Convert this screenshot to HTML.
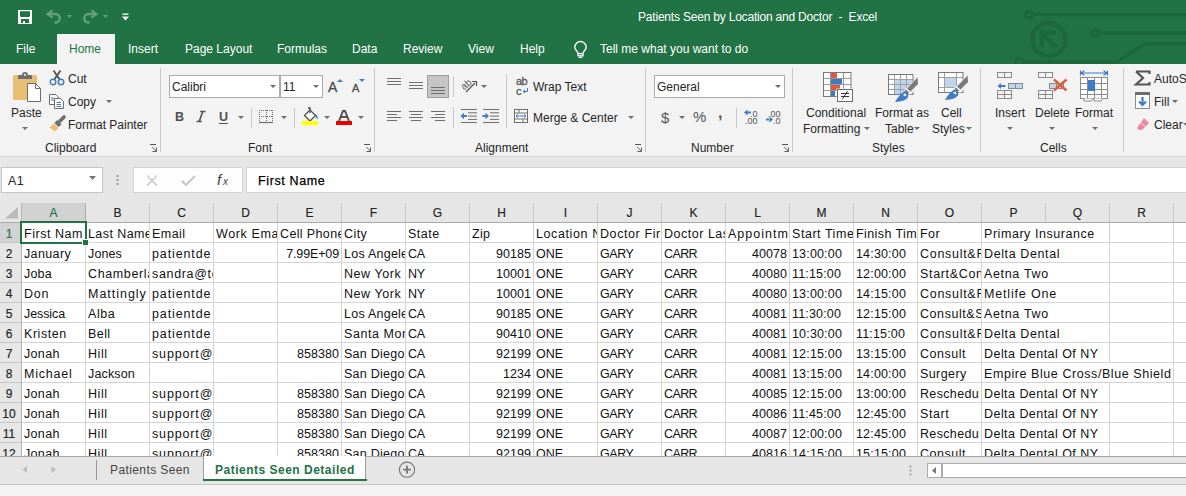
<!DOCTYPE html><html><head><meta charset="utf-8"><style>
html,body{margin:0;padding:0}
body{width:1186px;height:496px;overflow:hidden;position:relative;background:#f3f3f3;font-family:"Liberation Sans",sans-serif}
.t{position:absolute;white-space:nowrap;line-height:1}
svg{overflow:visible}
.cell{font-size:12.5px;letter-spacing:0.5px;color:#111;height:19px;line-height:19px;}
.tx{letter-spacing:0.62px}
.c{overflow:hidden;padding-left:2px;box-sizing:border-box;width:63px}
.r{text-align:right;overflow:hidden}
</style></head><body>
<div style="position:absolute;left:0px;top:0px;width:1186px;height:64px;background:#217346"></div>
<svg style="position:absolute;left:990px;top:0px;" width="196" height="64" viewBox="0 0 196 64"><g fill="none" stroke="#1d673d" stroke-width="3.5"><circle cx="39.2" cy="14.5" r="3.6"/><line x1="43" y1="14.5" x2="196" y2="14.5"/><circle cx="58.7" cy="39.7" r="16.5" stroke-width="4.5"/><circle cx="105" cy="33" r="3.6"/><line x1="108.8" y1="33" x2="196" y2="33"/><polyline points="33,62 127,62 155.4,43.8 196,43.8"/><circle cx="29.4" cy="62" r="3.6"/></g><g fill="none" stroke="#1d673d" stroke-width="4.2"><polyline points="66,32.6 51.6,32.6 51.6,47"/><line x1="53" y1="34" x2="66.5" y2="47.5"/></g></svg>
<svg style="position:absolute;left:18px;top:10px;" width="14" height="14" viewBox="0 0 14 14"><rect x="0" y="0" width="14" height="14" fill="#fff"/><path d="M2,1.2 H12 V6 L11,7 H3 L2,6 Z" fill="#217346"/><rect x="3" y="9" width="8" height="4" fill="#217346"/><rect x="5" y="11" width="2" height="2" fill="#fff"/></svg>
<svg style="position:absolute;left:42px;top:6px;" width="70" height="22" viewBox="0 0 70 22"><g fill="none" stroke="#68a07f" stroke-width="2.3"><polyline points="10.5,4.3 5.6,8 10.5,11.7"/><path d="M6,8 H13.5 A4.25,4.25 0 0 1 13.5,16.5 H12.5"/><polyline points="49.5,4.3 54.4,8 49.5,11.7"/><path d="M54,8 H46.5 A4.25,4.25 0 0 0 46.5,16.5 H47.5"/></g><path d="M25,9 H30 L27.5,12 Z M61,9 H66 L63.5,12 Z" fill="#68a07f"/></svg>
<svg style="position:absolute;left:122px;top:13px;" width="7" height="8" viewBox="0 0 7 8"><rect x="0.5" y="0.5" width="6" height="1.3" fill="#fff"/><path d="M0,3.5 H7 L3.5,7.5 Z" fill="#fff"/></svg>
<div class="t " style="left:638px;top:11px;font-size:12px;color:#fff;letter-spacing:-0.2px">Patients Seen by Location and Doctor&nbsp;&nbsp;-&nbsp;&nbsp;Excel</div>
<div style="position:absolute;left:57px;top:34px;width:58px;height:30px;background:#f3f3f3"></div>
<div class="t " style="left:16px;top:43px;font-size:12px;color:#fff;">File</div>
<div class="t " style="left:128px;top:43px;font-size:12px;color:#fff;">Insert</div>
<div class="t " style="left:185px;top:43px;font-size:12px;color:#fff;">Page Layout</div>
<div class="t " style="left:277px;top:43px;font-size:12px;color:#fff;">Formulas</div>
<div class="t " style="left:352px;top:43px;font-size:12px;color:#fff;">Data</div>
<div class="t " style="left:403px;top:43px;font-size:12px;color:#fff;">Review</div>
<div class="t " style="left:468px;top:43px;font-size:12px;color:#fff;">View</div>
<div class="t " style="left:520px;top:43px;font-size:12px;color:#fff;">Help</div>
<div class="t " style="left:600px;top:43px;font-size:12px;color:#fff;">Tell me what you want to do</div>
<div class="t " style="left:69px;top:43px;font-size:12px;color:#217346;">Home</div>
<svg style="position:absolute;left:573px;top:40.5px;" width="15" height="18" viewBox="0 0 15 18"><path d="M4.8,12.2 C4.8,10 1.8,8.8 1.8,6.2 A5.7,5.7 0 0 1 13.2,6.2 C13.2,8.8 10.2,10 10.2,12.2" fill="none" stroke="#fff" stroke-width="1.35"/><rect x="5" y="12.6" width="5" height="2.2" fill="none" stroke="#fff" stroke-width="1.35"/><line x1="5.8" y1="16.4" x2="9.2" y2="16.4" stroke="#fff" stroke-width="1.35"/></svg>
<div style="position:absolute;left:0px;top:64px;width:1186px;height:92px;background:#f3f3f3"></div>
<div style="position:absolute;left:0px;top:156px;width:1186px;height:1px;background:#d6d6d6"></div>
<div style="position:absolute;left:160px;top:68px;width:1px;height:84px;background:#c9c9c9"></div>
<div style="position:absolute;left:374px;top:68px;width:1px;height:84px;background:#c9c9c9"></div>
<div style="position:absolute;left:645px;top:68px;width:1px;height:84px;background:#c9c9c9"></div>
<div style="position:absolute;left:792px;top:68px;width:1px;height:84px;background:#c9c9c9"></div>
<div style="position:absolute;left:980px;top:68px;width:1px;height:84px;background:#c9c9c9"></div>
<div style="position:absolute;left:1123px;top:68px;width:1px;height:84px;background:#c9c9c9"></div>
<svg style="position:absolute;left:12px;top:71px;" width="31" height="32" viewBox="0 0 31 32"><rect x="1" y="4" width="24" height="25" rx="1.5" fill="#e8be74"/><path d="M6,8 V5 Q6,4 7,4 H10 A3,3 0 0 1 16,4 H19 Q20,4 20,5 V8 Z" fill="#6d6d6d"/><circle cx="13" cy="3.8" r="1.1" fill="#f3f3f3"/><path d="M15.5,12.5 H23.5 L28.5,17.5 V30.5 H15.5 Z" fill="#fff" stroke="#6d6d6d" stroke-width="1"/><path d="M23.5,12.5 V17.5 H28.5" fill="none" stroke="#6d6d6d" stroke-width="1"/></svg>
<div class="t " style="left:11px;top:107px;font-size:12px;color:#262626;">Paste</div>
<svg style="position:absolute;left:22px;top:127px;" width="6" height="4" viewBox="0 0 6 4"><path d="M0,0 H6 L3,3 Z" fill="#6d6d6d"/></svg>
<svg style="position:absolute;left:49px;top:70px;" width="16" height="16" viewBox="0 0 16 16"><path d="M4.5,0.5 L11,10 M11.5,0.5 L5,10" stroke="#555" stroke-width="1.9" fill="none"/><circle cx="4" cy="12" r="2.8" fill="none" stroke="#3f7cc6" stroke-width="1.4"/><circle cx="12" cy="12" r="2.8" fill="none" stroke="#3f7cc6" stroke-width="1.4"/></svg>
<div class="t " style="left:68px;top:73px;font-size:12px;color:#262626;">Cut</div>
<svg style="position:absolute;left:48px;top:93px;" width="17" height="16" viewBox="0 0 17 16"><path d="M1.5,1.5 H8 L10,3.5 V11.5 H1.5 Z" fill="#fff" stroke="#6d6d6d" stroke-width="1"/><path d="M6.5,5.5 H12.5 L15.5,8.5 V15.5 H6.5 Z" fill="#fff" stroke="#6d6d6d" stroke-width="1"/><path d="M3,5 H6 M3,7 H6 M8.5,9.5 H13 M8.5,11.5 H13 M8.5,13.5 H13" stroke="#3f7cc6" stroke-width="1"/></svg>
<div class="t " style="left:68px;top:96px;font-size:12px;color:#262626;">Copy</div>
<svg style="position:absolute;left:106px;top:100px;" width="6" height="4" viewBox="0 0 6 4"><path d="M0,0 H6 L3,3 Z" fill="#6d6d6d"/></svg>
<svg style="position:absolute;left:49px;top:116px;" width="17" height="16" viewBox="0 0 17 16"><path d="M11,5 L15,1" stroke="#6d6d6d" stroke-width="3.6" stroke-linecap="round"/><path d="M8,4 L12.5,8.5 L9.5,11 L5.5,7 Z" fill="#6d6d6d"/><path d="M5,7.5 L9.5,12 L6,15.5 L0.5,11.5 Q3,9 5,7.5 Z" fill="#e8be74"/></svg>
<div class="t " style="left:68px;top:119px;font-size:12px;color:#262626;">Format Painter</div>
<div class="t " style="left:45px;top:142px;font-size:12px;color:#262626;">Clipboard</div>
<svg style="position:absolute;left:150px;top:144px;" width="8" height="9" viewBox="0 0 8 9"><rect x="0" y="0" width="6" height="1" fill="#555"/><path d="M2.3,3 L6.3,7 M6.5,3.5 V7.5 H2.5" fill="none" stroke="#555" stroke-width="0.95"/></svg>
<div style="position:absolute;left:169px;top:75px;width:111px;height:23px;background:#fff;border:1px solid #ababab;box-sizing:border-box"></div>
<div style="position:absolute;left:280px;top:75px;width:43px;height:23px;background:#fff;border:1px solid #ababab;box-sizing:border-box"></div>
<div class="t " style="left:172px;top:81px;font-size:12px;color:#262626;">Calibri</div>
<svg style="position:absolute;left:270px;top:85px;" width="6" height="4" viewBox="0 0 6 4"><path d="M0,0 H6 L3,3 Z" fill="#6d6d6d"/></svg>
<div class="t " style="left:283px;top:81px;font-size:12px;color:#262626;">11</div>
<svg style="position:absolute;left:313px;top:85px;" width="6" height="4" viewBox="0 0 6 4"><path d="M0,0 H6 L3,3 Z" fill="#6d6d6d"/></svg>
<div class="t " style="left:328px;top:80px;font-size:14px;color:#4a4a4a;-webkit-text-stroke:0.3px #4a4a4a">A</div>
<svg style="position:absolute;left:337px;top:79px;" width="6" height="4" viewBox="0 0 6 4"><path d="M0,3 H6 L3,0 Z" fill="#3f7cc6"/></svg>
<div class="t " style="left:352px;top:83px;font-size:11px;color:#4a4a4a;-webkit-text-stroke:0.3px #4a4a4a">A</div>
<svg style="position:absolute;left:359px;top:79px;" width="6" height="4" viewBox="0 0 6 4"><path d="M0,0 H6 L3,3 Z" fill="#3f7cc6"/></svg>
<div class="t " style="left:175px;top:110.75px;font-size:12.5px;color:#505050;font-weight:bold">B</div>
<svg style="position:absolute;left:196px;top:111px;" width="10" height="11" viewBox="0 0 10 11"><path d="M4.2,0.5 H9.5 M0.5,10.5 H5.8 M6.8,0.5 L3.2,10.5" stroke="#505050" stroke-width="1.6" fill="none"/></svg>
<div class="t " style="left:219px;top:110.75px;font-size:12.5px;color:#505050;font-weight:bold">U</div>
<div style="position:absolute;left:219px;top:123px;width:9px;height:1.4px;background:#505050"></div>
<svg style="position:absolute;left:238px;top:116px;" width="6" height="4" viewBox="0 0 6 4"><path d="M0,0 H6 L3,3 Z" fill="#6d6d6d"/></svg>
<div style="position:absolute;left:251px;top:108px;width:1px;height:20px;background:#c8c8c8"></div>
<svg style="position:absolute;left:259px;top:110px;" width="14" height="14" viewBox="0 0 14 14"><g fill="none" stroke="#6d6d6d" stroke-width="1" stroke-dasharray="1,1"><path d="M0.5,0 V12 M13.5,0 V12 M0,0.5 H14 M7.5,0 V12 M0,6.5 H14"/></g><path d="M0,12.5 H14" stroke="#6d6d6d" stroke-width="1.2"/></svg>
<svg style="position:absolute;left:281px;top:116px;" width="6" height="4" viewBox="0 0 6 4"><path d="M0,0 H6 L3,3 Z" fill="#6d6d6d"/></svg>
<div style="position:absolute;left:294px;top:108px;width:1px;height:20px;background:#c8c8c8"></div>
<svg style="position:absolute;left:302px;top:107px;" width="17" height="19" viewBox="0 0 17 19"><path d="M2.5,8.5 L8,3 L13.5,8.5 L8,14 Z" fill="#fff" stroke="#505050" stroke-width="1.3" stroke-linejoin="round"/><path d="M6,1 H8 V6" fill="none" stroke="#505050" stroke-width="1.3"/><path d="M13,7 Q16.5,8 15.5,12.5 Q13.5,11 13,7 Z" fill="#3f7cc6"/><rect x="0" y="14" width="16" height="4" fill="#ffff00"/></svg>
<svg style="position:absolute;left:324px;top:116px;" width="6" height="4" viewBox="0 0 6 4"><path d="M0,0 H6 L3,3 Z" fill="#6d6d6d"/></svg>
<svg style="position:absolute;left:336px;top:110px;" width="16" height="16" viewBox="0 0 16 16"><path d="M3,11.2 L7,1 H9 L13,11.2 M5,7 H11" fill="none" stroke="#505050" stroke-width="1.9"/><rect x="0" y="11" width="16" height="4" fill="#ee0000"/></svg>
<svg style="position:absolute;left:358px;top:116px;" width="6" height="4" viewBox="0 0 6 4"><path d="M0,0 H6 L3,3 Z" fill="#6d6d6d"/></svg>
<div class="t " style="left:248px;top:142px;font-size:12px;color:#262626;">Font</div>
<svg style="position:absolute;left:364px;top:144px;" width="8" height="9" viewBox="0 0 8 9"><rect x="0" y="0" width="6" height="1" fill="#555"/><path d="M2.3,3 L6.3,7 M6.5,3.5 V7.5 H2.5" fill="none" stroke="#555" stroke-width="0.95"/></svg>
<svg style="position:absolute;left:387px;top:78px;" width="20" height="10" viewBox="0 0 20 10"><rect x="0" y="0" width="14" height="1" fill="#6d6d6d"/><rect x="0" y="3" width="14" height="1" fill="#6d6d6d"/><rect x="0" y="6" width="14" height="1" fill="#6d6d6d"/></svg>
<svg style="position:absolute;left:409px;top:82px;" width="20" height="10" viewBox="0 0 20 10"><rect x="0" y="0" width="14" height="1" fill="#6d6d6d"/><rect x="0" y="3" width="14" height="1" fill="#6d6d6d"/><rect x="0" y="6" width="14" height="1" fill="#6d6d6d"/></svg>
<div style="position:absolute;left:427px;top:75px;width:22px;height:23px;background:#c5c5c5;border:1px solid #9e9e9e;box-sizing:border-box"></div>
<svg style="position:absolute;left:431px;top:87px;" width="20" height="10" viewBox="0 0 20 10"><rect x="0" y="0" width="14" height="1" fill="#6d6d6d"/><rect x="0" y="3" width="14" height="1" fill="#6d6d6d"/><rect x="0" y="6" width="14" height="1" fill="#6d6d6d"/></svg>
<div style="position:absolute;left:453px;top:76px;width:1px;height:21px;background:#c8c8c8"></div>
<svg style="position:absolute;left:460px;top:77px;" width="28" height="17" viewBox="0 0 28 17"><text x="1" y="11" font-size="10" font-family="Liberation Sans" fill="#555" transform="rotate(-40 6 8)">ab</text><path d="M6,15 L15,6" stroke="#555" stroke-width="1.2"/><path d="M12,4.5 H16.5 V9" fill="none" stroke="#555" stroke-width="1.2"/><path d="M21,8 H27 L24,11 Z" fill="#6d6d6d"/></svg>
<div style="position:absolute;left:506px;top:74px;width:1px;height:54px;background:#c8c8c8"></div>
<div class="t " style="left:516px;top:76px;font-size:11px;color:#555;letter-spacing:-0.6px;-webkit-text-stroke:0.3px #555">ab</div>
<div class="t " style="left:516px;top:86px;font-size:11px;color:#555;-webkit-text-stroke:0.3px #555">c</div>
<svg style="position:absolute;left:522px;top:88px;" width="7" height="6" viewBox="0 0 7 6"><path d="M5.5,0 V3.5 H1.5 M3,2 L1,3.5 L3,5" fill="none" stroke="#3f7cc6" stroke-width="1"/></svg>
<div class="t " style="left:533px;top:81px;font-size:12px;color:#262626;">Wrap Text</div>
<svg style="position:absolute;left:387px;top:111px;" width="20" height="13" viewBox="0 0 20 13"><rect x="0" y="0" width="14" height="1" fill="#6d6d6d"/><rect x="0" y="3" width="10" height="1" fill="#6d6d6d"/><rect x="0" y="6" width="14" height="1" fill="#6d6d6d"/><rect x="0" y="9" width="10" height="1" fill="#6d6d6d"/></svg>
<svg style="position:absolute;left:409px;top:111px;" width="20" height="13" viewBox="0 0 20 13"><rect x="0" y="0" width="14" height="1" fill="#6d6d6d"/><rect x="2" y="3" width="10" height="1" fill="#6d6d6d"/><rect x="0" y="6" width="14" height="1" fill="#6d6d6d"/><rect x="2" y="9" width="10" height="1" fill="#6d6d6d"/></svg>
<svg style="position:absolute;left:431px;top:111px;" width="20" height="13" viewBox="0 0 20 13"><rect x="0" y="0" width="14" height="1" fill="#6d6d6d"/><rect x="4" y="3" width="10" height="1" fill="#6d6d6d"/><rect x="0" y="6" width="14" height="1" fill="#6d6d6d"/><rect x="4" y="9" width="10" height="1" fill="#6d6d6d"/></svg>
<div style="position:absolute;left:453px;top:107px;width:1px;height:21px;background:#c8c8c8"></div>
<svg style="position:absolute;left:460px;top:109px;" width="18" height="15" viewBox="0 0 18 15"><rect x="1" y="0" width="16" height="1" fill="#6d6d6d"/><rect x="1" y="13" width="16" height="1" fill="#6d6d6d"/><rect x="8" y="3.3" width="9" height="1" fill="#6d6d6d"/><rect x="8" y="6.6" width="9" height="1" fill="#6d6d6d"/><rect x="8" y="9.9" width="9" height="1" fill="#6d6d6d"/><path d="M0.5,7 L4,3.8 V10.2 Z" fill="#3f7cc6"/><rect x="3" y="6" width="4" height="2" fill="#3f7cc6"/></svg>
<svg style="position:absolute;left:482px;top:109px;" width="18" height="15" viewBox="0 0 18 15"><rect x="1" y="0" width="16" height="1" fill="#6d6d6d"/><rect x="1" y="13" width="16" height="1" fill="#6d6d6d"/><rect x="8" y="3.3" width="9" height="1" fill="#6d6d6d"/><rect x="8" y="6.6" width="9" height="1" fill="#6d6d6d"/><rect x="8" y="9.9" width="9" height="1" fill="#6d6d6d"/><path d="M7,7 L3.5,3.8 V10.2 Z" fill="#3f7cc6"/><rect x="0.5" y="6" width="4" height="2" fill="#3f7cc6"/></svg>
<svg style="position:absolute;left:513px;top:108px;" width="16" height="16" viewBox="0 0 16 16"><rect x="1.5" y="1.5" width="13" height="13" fill="#fff" stroke="#6d6d6d" stroke-width="1"/><path d="M1.5,5 H14.5 M1.5,11 H14.5 M6,1.5 V5 M10,11 V14.5" stroke="#6d6d6d" stroke-width="1"/><path d="M3,8 H13 M3,8 L5,6.3 M3,8 L5,9.7 M13,8 L11,6.3 M13,8 L11,9.7" stroke="#3f7cc6" stroke-width="1" fill="none"/></svg>
<div class="t " style="left:533px;top:112px;font-size:12px;color:#262626;">Merge &amp; Center</div>
<svg style="position:absolute;left:628px;top:116px;" width="6" height="4" viewBox="0 0 6 4"><path d="M0,0 H6 L3,3 Z" fill="#6d6d6d"/></svg>
<div class="t " style="left:475px;top:142px;font-size:12px;color:#262626;">Alignment</div>
<svg style="position:absolute;left:635px;top:144px;" width="8" height="9" viewBox="0 0 8 9"><rect x="0" y="0" width="6" height="1" fill="#555"/><path d="M2.3,3 L6.3,7 M6.5,3.5 V7.5 H2.5" fill="none" stroke="#555" stroke-width="0.95"/></svg>
<div style="position:absolute;left:654px;top:75px;width:131px;height:23px;background:#fff;border:1px solid #ababab;box-sizing:border-box"></div>
<div class="t " style="left:657px;top:81px;font-size:12px;color:#262626;">General</div>
<svg style="position:absolute;left:775px;top:85px;" width="6" height="4" viewBox="0 0 6 4"><path d="M0,0 H6 L3,3 Z" fill="#6d6d6d"/></svg>
<div class="t " style="left:661px;top:110px;font-size:15px;color:#555;">$</div>
<svg style="position:absolute;left:679px;top:116px;" width="6" height="4" viewBox="0 0 6 4"><path d="M0,0 H6 L3,3 Z" fill="#6d6d6d"/></svg>
<div class="t " style="left:693px;top:109px;font-size:15px;color:#555;">%</div>
<div class="t " style="left:718px;top:105px;font-size:16px;color:#555;font-weight:bold">,</div>
<div style="position:absolute;left:736px;top:108px;width:1px;height:20px;background:#c8c8c8"></div>
<svg style="position:absolute;left:743px;top:109px;" width="16" height="15" viewBox="0 0 16 15"><path d="M1,3.5 L4.5,0.5 V6.5 Z M3,2.6 H8 V4.4 H3 Z" fill="#3f7cc6"/></svg>
<div class="t " style="left:750px;top:110px;font-size:9px;color:#555;">.0</div>
<div class="t " style="left:745px;top:117px;font-size:9px;color:#555;">.00</div>
<svg style="position:absolute;left:765px;top:109px;" width="16" height="15" viewBox="0 0 16 15"><path d="M8,10.5 L4.5,7.5 V13.5 Z M1,9.6 H5 V11.4 H1 Z" fill="#3f7cc6"/></svg>
<div class="t " style="left:768px;top:110px;font-size:9px;color:#555;">.00</div>
<div class="t " style="left:773px;top:117px;font-size:9px;color:#555;">.0</div>
<div class="t " style="left:691px;top:142px;font-size:12px;color:#262626;">Number</div>
<svg style="position:absolute;left:782px;top:144px;" width="8" height="9" viewBox="0 0 8 9"><rect x="0" y="0" width="6" height="1" fill="#555"/><path d="M2.3,3 L6.3,7 M6.5,3.5 V7.5 H2.5" fill="none" stroke="#555" stroke-width="0.95"/></svg>
<svg style="position:absolute;left:822px;top:71px;" width="32" height="32" viewBox="0 0 32 32"><rect x="1.5" y="1.5" width="27.5" height="24" fill="#fff"/><rect x="9" y="2" width="6" height="5.5" fill="#e15b3b"/><rect x="9" y="8" width="11" height="5.5" fill="#3f7cc6"/><rect x="9" y="14" width="9" height="5.5" fill="#e15b3b"/><rect x="9" y="20" width="4" height="5.5" fill="#3f7cc6"/><path d="M1.5,7.5 H29 M1.5,13.5 H29 M1.5,19.5 H29 M8.5,1.5 V25.5 M21.5,1.5 V25.5" stroke="#9a9a9a" stroke-width="1" fill="none"/><rect x="1.5" y="1.5" width="27.5" height="24" fill="none" stroke="#7a7a7a" stroke-width="1"/><rect x="14.5" y="17.5" width="17" height="14" fill="#f3f3f3"/><rect x="15.5" y="18.5" width="15" height="12" fill="#fff" stroke="#6d6d6d" stroke-width="1"/><path d="M19,22.5 H27 M19,25.5 H27 M25.5,20 L20.5,28" stroke="#333" stroke-width="1" fill="none"/></svg>
<div class="t " style="left:806px;top:107px;font-size:12px;color:#262626;">Conditional</div>
<div class="t " style="left:803px;top:123px;font-size:12px;color:#262626;">Formatting</div>
<svg style="position:absolute;left:864px;top:127px;" width="6" height="4" viewBox="0 0 6 4"><path d="M0,0 H6 L3,3 Z" fill="#6d6d6d"/></svg>
<svg style="position:absolute;left:886px;top:72px;" width="34" height="32" viewBox="0 0 34 32"><rect x="2.5" y="2.5" width="24.5" height="20" fill="#fff"/><rect x="8.5" y="7.5" width="18.5" height="15" fill="#c0d4ec"/><path d="M8.5,2.5 V22.5 M14.5,2.5 V22.5 M20.5,2.5 V22.5 M2.5,7.5 H27 M2.5,12.5 H27 M2.5,17.5 H27" stroke="#a0a0a0" stroke-width="1" fill="none"/><rect x="2.5" y="2.5" width="24.5" height="20" fill="none" stroke="#7a7a7a"/><path d="M33,4 L34,13 L24,23 L18,18 Z" fill="#f3f3f3"/><path d="M31.5,5.5 L32,12 L24.5,19.5 L21,16.5 Z" fill="#7a7a7a"/><path d="M20,17.5 L23,20.5 L21.5,22 L18.5,19 Z" fill="#7a7a7a"/><path d="M18,19.5 Q23,20 22,25.5 Q19,29.5 9,30 Q12,24 18,19.5 Z" fill="#3f7cc6"/><path d="M18.5,21.5 Q21,22 20,24.5 Q18.5,23.5 17,23 Z" fill="#fff"/></svg>
<div class="t " style="left:875px;top:107px;font-size:12px;color:#262626;">Format as</div>
<div class="t " style="left:885px;top:123px;font-size:12px;color:#262626;">Table</div>
<svg style="position:absolute;left:914px;top:127px;" width="6" height="4" viewBox="0 0 6 4"><path d="M0,0 H6 L3,3 Z" fill="#6d6d6d"/></svg>
<svg style="position:absolute;left:936px;top:70px;" width="34" height="32" viewBox="0 0 34 32"><rect x="2.5" y="2.5" width="24.5" height="20" fill="#fff"/><rect x="8.5" y="7.5" width="12" height="10" fill="#c0d4ec"/><path d="M8.5,2.5 V22.5 M20.5,2.5 V22.5 M2.5,7.5 H27 M2.5,17.5 H27" stroke="#a0a0a0" stroke-width="1" fill="none"/><rect x="2.5" y="2.5" width="24.5" height="20" fill="none" stroke="#7a7a7a"/><path d="M33,4 L34,13 L24,23 L18,18 Z" fill="#f3f3f3"/><path d="M31.5,5.5 L32,12 L24.5,19.5 L21,16.5 Z" fill="#7a7a7a"/><path d="M20,17.5 L23,20.5 L21.5,22 L18.5,19 Z" fill="#7a7a7a"/><path d="M18,19.5 Q23,20 22,25.5 Q19,29.5 9,30 Q12,24 18,19.5 Z" fill="#3f7cc6"/><path d="M18.5,21.5 Q21,22 20,24.5 Q18.5,23.5 17,23 Z" fill="#fff"/></svg>
<div class="t " style="left:941px;top:107px;font-size:12px;color:#262626;">Cell</div>
<div class="t " style="left:932px;top:123px;font-size:12px;color:#262626;">Styles</div>
<svg style="position:absolute;left:966px;top:127px;" width="6" height="4" viewBox="0 0 6 4"><path d="M0,0 H6 L3,3 Z" fill="#6d6d6d"/></svg>
<div class="t " style="left:872px;top:142px;font-size:12px;color:#262626;">Styles</div>
<svg style="position:absolute;left:997px;top:72px;" width="15" height="6" viewBox="0 0 15 6"><rect x="0.5" y="0.5" width="14" height="5" fill="none" stroke="#8a8a8a"/><path d="M7.5,0.5 V5.5" stroke="#8a8a8a"/></svg>
<svg style="position:absolute;left:1008px;top:83px;" width="15" height="6" viewBox="0 0 15 6"><rect x="0.5" y="0.5" width="7" height="5" fill="#c0d4ec"/><rect x="7.5" y="0.5" width="7" height="5" fill="#c0d4ec"/><rect x="0.5" y="0.5" width="14" height="5" fill="none" stroke="#8a8a8a"/><path d="M7.5,0.5 V5.5" stroke="#8a8a8a"/></svg>
<svg style="position:absolute;left:997px;top:90px;" width="15" height="9" viewBox="0 0 15 9"><rect x="0.5" y="0.5" width="14" height="8" fill="none" stroke="#8a8a8a"/><path d="M7.5,0.5 V8.5" stroke="#8a8a8a"/><path d="M0.5,4.5 H14.5" stroke="#8a8a8a"/></svg>
<svg style="position:absolute;left:997px;top:82px;" width="10" height="8" viewBox="0 0 10 8"><path d="M0.5,4 L4,1 V7 Z M3,3.1 H8.5 V4.9 H3 Z" fill="#3f7cc6"/></svg>
<div class="t " style="left:995px;top:107px;font-size:12px;color:#262626;">Insert</div>
<svg style="position:absolute;left:1007px;top:127px;" width="6" height="4" viewBox="0 0 6 4"><path d="M0,0 H6 L3,3 Z" fill="#6d6d6d"/></svg>
<svg style="position:absolute;left:1038px;top:72px;" width="15" height="6" viewBox="0 0 15 6"><rect x="0.5" y="0.5" width="14" height="5" fill="none" stroke="#8a8a8a"/><path d="M7.5,0.5 V5.5" stroke="#8a8a8a"/></svg>
<svg style="position:absolute;left:1049px;top:83px;" width="15" height="6" viewBox="0 0 15 6"><rect x="0.5" y="0.5" width="7" height="5" fill="#c0d4ec"/><rect x="7.5" y="0.5" width="7" height="5" fill="#c0d4ec"/><rect x="0.5" y="0.5" width="14" height="5" fill="none" stroke="#8a8a8a"/><path d="M7.5,0.5 V5.5" stroke="#8a8a8a"/></svg>
<svg style="position:absolute;left:1038px;top:90px;" width="15" height="9" viewBox="0 0 15 9"><rect x="0.5" y="0.5" width="14" height="8" fill="none" stroke="#8a8a8a"/><path d="M7.5,0.5 V8.5" stroke="#8a8a8a"/><path d="M0.5,4.5 H14.5" stroke="#8a8a8a"/></svg>
<svg style="position:absolute;left:1052px;top:78px;" width="17" height="14" viewBox="0 0 17 14"><path d="M2,1.5 L14.5,12.5 M14.5,1.5 L2,12.5" stroke="#e15b3b" stroke-width="2.4" fill="none"/></svg>
<div class="t " style="left:1035px;top:107px;font-size:12px;color:#262626;">Delete</div>
<svg style="position:absolute;left:1049px;top:127px;" width="6" height="4" viewBox="0 0 6 4"><path d="M0,0 H6 L3,3 Z" fill="#6d6d6d"/></svg>
<svg style="position:absolute;left:1079px;top:70px;" width="31" height="32" viewBox="0 0 31 32"><path d="M1.5,0.5 V5.5 M28.5,0.5 V5.5 M2,3 H28 M2,3 L5.5,0.8 M2,3 L5.5,5.2 M28,3 L24.5,0.8 M28,3 L24.5,5.2" stroke="#3f7cc6" stroke-width="1.2" fill="none"/><rect x="1.5" y="7.5" width="27" height="21" fill="#fff" stroke="#8a8a8a"/><path d="M1.5,13.5 H28.5 M1.5,19.5 H28.5 M1.5,24.5 H28.5 M8.5,7.5 V28.5 M15.5,7.5 V28.5 M22.5,7.5 V28.5" stroke="#8a8a8a" fill="none"/><rect x="9" y="10" width="7" height="11" fill="#3f7cc6"/><path d="M5,28.5 L5,31 H12 L14,28.5 M15,28.5 L15,31 H22 L24,28.5" fill="#fff" stroke="#8a8a8a"/></svg>
<div class="t " style="left:1075px;top:107px;font-size:12px;color:#262626;">Format</div>
<svg style="position:absolute;left:1092px;top:127px;" width="6" height="4" viewBox="0 0 6 4"><path d="M0,0 H6 L3,3 Z" fill="#6d6d6d"/></svg>
<div class="t " style="left:1040px;top:142px;font-size:12px;color:#262626;">Cells</div>
<svg style="position:absolute;left:1135px;top:70px;" width="16" height="16" viewBox="0 0 16 16"><path d="M1,1.5 H14.5 V4 M1,1.5 L8,8 L1,14.5 H14.5 V12" fill="none" stroke="#555" stroke-width="2.2"/></svg>
<div class="t " style="left:1154px;top:73px;font-size:12px;color:#262626;">AutoSum</div>
<svg style="position:absolute;left:1135px;top:92px;" width="16" height="17" viewBox="0 0 16 17"><rect x="0.5" y="0.5" width="14" height="16" fill="#fff" stroke="#8a8a8a"/><rect x="0" y="0" width="15" height="3" fill="#6d6d6d"/><path d="M7.5,5 V13 M4,9.5 L7.5,13 L11,9.5" stroke="#3f7cc6" stroke-width="2.2" fill="none"/></svg>
<div class="t " style="left:1154px;top:96px;font-size:12px;color:#262626;">Fill</div>
<svg style="position:absolute;left:1172px;top:100px;" width="6" height="4" viewBox="0 0 6 4"><path d="M0,0 H6 L3,3 Z" fill="#6d6d6d"/></svg>
<svg style="position:absolute;left:1136px;top:117px;" width="14" height="14" viewBox="0 0 14 14"><path d="M8,1 L13,6 L6,13 L3,13 L1,11 Z" fill="#e88aa0"/><path d="M4.5,5 L9,9.5" stroke="#f3f3f3" stroke-width="1"/></svg>
<div class="t " style="left:1154px;top:119px;font-size:12px;color:#262626;">Clear</div>
<svg style="position:absolute;left:1183px;top:123px;" width="6" height="4" viewBox="0 0 6 4"><path d="M0,0 H6 L3,3 Z" fill="#6d6d6d"/></svg>
<div style="position:absolute;left:0px;top:157px;width:1186px;height:46px;background:#e6e6e6"></div>
<div style="position:absolute;left:1px;top:167px;width:102px;height:26px;background:#fff;border:1px solid #c6c6c6;box-sizing:border-box"></div>
<div class="t " style="left:8px;top:174.75px;font-size:12.5px;color:#262626;letter-spacing:0.3px">A1</div>
<svg style="position:absolute;left:89px;top:176px;" width="8" height="5" viewBox="0 0 8 5"><path d="M0,0 H7 L3.5,4 Z" fill="#777"/></svg>
<svg style="position:absolute;left:116px;top:174px;" width="4" height="12" viewBox="0 0 4 12"><rect x="0.5" y="1" width="2" height="2" fill="#9a9a9a"/><rect x="0.5" y="5" width="2" height="2" fill="#9a9a9a"/><rect x="0.5" y="9" width="2" height="2" fill="#9a9a9a"/></svg>
<div style="position:absolute;left:133px;top:167px;width:110px;height:26px;background:#fdfdfd;border:1px solid #d4d4d4;box-sizing:border-box"></div>
<svg style="position:absolute;left:146px;top:175px;" width="12" height="11" viewBox="0 0 12 11"><path d="M1,0.5 L11,10.5 M11,0.5 L1,10.5" stroke="#c2c2c2" stroke-width="1.3"/></svg>
<svg style="position:absolute;left:181px;top:175px;" width="15" height="11" viewBox="0 0 15 11"><path d="M1,6 L5,10 L14,1" fill="none" stroke="#c2c2c2" stroke-width="1.8"/></svg>
<div class="t " style="left:217px;top:172px;font-size:15px;color:#444;font-family:"Liberation Serif",serif"><i>f</i></div>
<div class="t " style="left:223px;top:177px;font-size:10px;color:#444;font-family:"Liberation Serif",serif;-webkit-text-stroke:0.3px #444"><i>x</i></div>
<div style="position:absolute;left:246px;top:167px;width:940px;height:26px;background:#fff;border:1px solid #d4d4d4;border-right:none;box-sizing:border-box"></div>
<div class="t " style="left:258px;top:174.75px;font-size:12.5px;color:#000;letter-spacing:0.62px;-webkit-text-stroke:0.25px #000">First Name</div>
<div style="position:absolute;left:0px;top:203px;width:1186px;height:19px;background:#e6e6e6"></div>
<div style="position:absolute;left:22px;top:203px;width:63px;height:19px;background:#d2d2d2"></div>
<div style="position:absolute;left:0px;top:222px;width:1186px;height:234px;background:#fff"></div>
<svg style="position:absolute;left:5px;top:207px;" width="14" height="12" viewBox="0 0 14 12"><path d="M13,0 V11.5 H0 Z" fill="#b9b9b9"/></svg>
<div style="position:absolute;left:0px;top:223px;width:21px;height:233px;background:#e6e6e6"></div>
<div style="position:absolute;left:0px;top:223px;width:21px;height:19px;background:#d2d2d2"></div>
<div style="position:absolute;left:21px;top:203px;width:1px;height:253px;background:#b4b4b4"></div>
<div style="position:absolute;left:0px;top:222px;width:1186px;height:1px;background:#ababab"></div>
<div style="position:absolute;left:85px;top:203px;width:1px;height:19px;background:#c6c6c6"></div>
<div class="t" style="left:22px;top:207px;width:63px;text-align:center;font-size:12px;color:#217346;-webkit-text-stroke:0.2px #217346">A</div>
<div style="position:absolute;left:149px;top:203px;width:1px;height:19px;background:#c6c6c6"></div>
<div class="t" style="left:86px;top:207px;width:63px;text-align:center;font-size:12px;color:#262626;-webkit-text-stroke:0.2px #262626">B</div>
<div style="position:absolute;left:213px;top:203px;width:1px;height:19px;background:#c6c6c6"></div>
<div class="t" style="left:150px;top:207px;width:63px;text-align:center;font-size:12px;color:#262626;-webkit-text-stroke:0.2px #262626">C</div>
<div style="position:absolute;left:277px;top:203px;width:1px;height:19px;background:#c6c6c6"></div>
<div class="t" style="left:214px;top:207px;width:63px;text-align:center;font-size:12px;color:#262626;-webkit-text-stroke:0.2px #262626">D</div>
<div style="position:absolute;left:341px;top:203px;width:1px;height:19px;background:#c6c6c6"></div>
<div class="t" style="left:278px;top:207px;width:63px;text-align:center;font-size:12px;color:#262626;-webkit-text-stroke:0.2px #262626">E</div>
<div style="position:absolute;left:405px;top:203px;width:1px;height:19px;background:#c6c6c6"></div>
<div class="t" style="left:342px;top:207px;width:63px;text-align:center;font-size:12px;color:#262626;-webkit-text-stroke:0.2px #262626">F</div>
<div style="position:absolute;left:469px;top:203px;width:1px;height:19px;background:#c6c6c6"></div>
<div class="t" style="left:406px;top:207px;width:63px;text-align:center;font-size:12px;color:#262626;-webkit-text-stroke:0.2px #262626">G</div>
<div style="position:absolute;left:533px;top:203px;width:1px;height:19px;background:#c6c6c6"></div>
<div class="t" style="left:470px;top:207px;width:63px;text-align:center;font-size:12px;color:#262626;-webkit-text-stroke:0.2px #262626">H</div>
<div style="position:absolute;left:597px;top:203px;width:1px;height:19px;background:#c6c6c6"></div>
<div class="t" style="left:534px;top:207px;width:63px;text-align:center;font-size:12px;color:#262626;-webkit-text-stroke:0.2px #262626">I</div>
<div style="position:absolute;left:661px;top:203px;width:1px;height:19px;background:#c6c6c6"></div>
<div class="t" style="left:598px;top:207px;width:63px;text-align:center;font-size:12px;color:#262626;-webkit-text-stroke:0.2px #262626">J</div>
<div style="position:absolute;left:725px;top:203px;width:1px;height:19px;background:#c6c6c6"></div>
<div class="t" style="left:662px;top:207px;width:63px;text-align:center;font-size:12px;color:#262626;-webkit-text-stroke:0.2px #262626">K</div>
<div style="position:absolute;left:789px;top:203px;width:1px;height:19px;background:#c6c6c6"></div>
<div class="t" style="left:726px;top:207px;width:63px;text-align:center;font-size:12px;color:#262626;-webkit-text-stroke:0.2px #262626">L</div>
<div style="position:absolute;left:853px;top:203px;width:1px;height:19px;background:#c6c6c6"></div>
<div class="t" style="left:790px;top:207px;width:63px;text-align:center;font-size:12px;color:#262626;-webkit-text-stroke:0.2px #262626">M</div>
<div style="position:absolute;left:917px;top:203px;width:1px;height:19px;background:#c6c6c6"></div>
<div class="t" style="left:854px;top:207px;width:63px;text-align:center;font-size:12px;color:#262626;-webkit-text-stroke:0.2px #262626">N</div>
<div style="position:absolute;left:981px;top:203px;width:1px;height:19px;background:#c6c6c6"></div>
<div class="t" style="left:918px;top:207px;width:63px;text-align:center;font-size:12px;color:#262626;-webkit-text-stroke:0.2px #262626">O</div>
<div style="position:absolute;left:1045px;top:203px;width:1px;height:19px;background:#c6c6c6"></div>
<div class="t" style="left:982px;top:207px;width:63px;text-align:center;font-size:12px;color:#262626;-webkit-text-stroke:0.2px #262626">P</div>
<div style="position:absolute;left:1109px;top:203px;width:1px;height:19px;background:#c6c6c6"></div>
<div class="t" style="left:1046px;top:207px;width:63px;text-align:center;font-size:12px;color:#262626;-webkit-text-stroke:0.2px #262626">Q</div>
<div style="position:absolute;left:1173px;top:203px;width:1px;height:19px;background:#c6c6c6"></div>
<div class="t" style="left:1110px;top:207px;width:63px;text-align:center;font-size:12px;color:#262626;-webkit-text-stroke:0.2px #262626">R</div>
<div class="t" style="left:1174px;top:207px;width:63px;text-align:center;font-size:12px;color:#262626;-webkit-text-stroke:0.2px #262626">S</div>
<div style="position:absolute;left:85px;top:203px;width:1px;height:19px;background:#ababab"></div>
<div class="t" style="left:0;top:228px;width:18px;text-align:center;font-size:12px;color:#217346;-webkit-text-stroke:0.2px #217346">1</div>
<div style="position:absolute;left:22px;top:242px;width:1164px;height:1px;background:#d4d4d4"></div>
<div style="position:absolute;left:0px;top:242px;width:21px;height:1px;background:#c6c6c6"></div>
<div class="t cell c" style="left:22px;top:225px;width:61px;letter-spacing:0.519px">First Name</div>
<div class="t cell c" style="left:86px;top:225px;width:63px;letter-spacing:0.421px">Last Name</div>
<div class="t cell c" style="left:150px;top:225px;width:63px;letter-spacing:0.439px">Email</div>
<div class="t cell c" style="left:214px;top:225px;width:63px;letter-spacing:0.634px">Work Email</div>
<div class="t cell c" style="left:278px;top:225px;width:63px;letter-spacing:0.362px">Cell Phone</div>
<div class="t cell c" style="left:342px;top:225px;width:63px;letter-spacing:0.445px">City</div>
<div class="t cell c" style="left:406px;top:225px;width:63px;letter-spacing:0.495px">State</div>
<div class="t cell c" style="left:470px;top:225px;width:63px;letter-spacing:0.341px">Zip</div>
<div class="t cell c" style="left:534px;top:225px;width:63px;letter-spacing:0.603px">Location Name</div>
<div class="t cell c" style="left:598px;top:225px;width:63px;letter-spacing:0.589px">Doctor First</div>
<div class="t cell c" style="left:662px;top:225px;width:63px;letter-spacing:0.514px">Doctor Last</div>
<div class="t cell c" style="left:726px;top:225px;width:63px;letter-spacing:1.004px">Appointment</div>
<div class="t cell c" style="left:790px;top:225px;width:63px;letter-spacing:0.544px">Start Time</div>
<div class="t cell c" style="left:854px;top:225px;width:63px;letter-spacing:0.414px">Finish Time</div>
<div class="t cell c" style="left:918px;top:225px;width:63px;letter-spacing:0.442px">For</div>
<div class="t cell" style="left:984px;top:225px;letter-spacing:0.549px">Primary Insurance</div>
<div class="t" style="left:0;top:248px;width:18px;text-align:center;font-size:12px;color:#262626;-webkit-text-stroke:0.2px #262626">2</div>
<div style="position:absolute;left:22px;top:262px;width:1164px;height:1px;background:#d4d4d4"></div>
<div style="position:absolute;left:0px;top:262px;width:21px;height:1px;background:#c6c6c6"></div>
<div class="t cell c" style="left:22px;top:245px;width:63px;letter-spacing:0.367px">January</div>
<div class="t cell c" style="left:86px;top:245px;width:63px;letter-spacing:0.125px">Jones</div>
<div class="t cell c" style="left:150px;top:245px;width:63px;letter-spacing:0.883px">patientde</div>
<div class="t cell r" style="left:278px;top:245px;width:61px;letter-spacing:-0.134px">7.99E+09</div>
<div class="t cell c" style="left:342px;top:245px;width:63px;letter-spacing:0.245px">Los Angeles</div>
<div class="t cell c" style="left:406px;top:245px;width:63px;letter-spacing:-0.325px">CA</div>
<div class="t cell r" style="left:470px;top:245px;width:61px;letter-spacing:0.048px">90185</div>
<div class="t cell c" style="left:534px;top:245px;width:63px;letter-spacing:-0.029px">ONE</div>
<div class="t cell c" style="left:598px;top:245px;width:63px;letter-spacing:-0.438px">GARY</div>
<div class="t cell c" style="left:662px;top:245px;width:63px;letter-spacing:-0.595px">CARR</div>
<div class="t cell r" style="left:726px;top:245px;width:61px;letter-spacing:0.048px">40078</div>
<div class="t cell c" style="left:790px;top:245px;width:63px;letter-spacing:0.168px">13:00:00</div>
<div class="t cell c" style="left:854px;top:245px;width:63px;letter-spacing:0.168px">14:30:00</div>
<div class="t cell c" style="left:918px;top:245px;width:63px;letter-spacing:0.709px">Consult&amp;Follow</div>
<div class="t cell" style="left:984px;top:245px;letter-spacing:0.612px">Delta Dental</div>
<div class="t" style="left:0;top:268px;width:18px;text-align:center;font-size:12px;color:#262626;-webkit-text-stroke:0.2px #262626">3</div>
<div style="position:absolute;left:22px;top:282px;width:1164px;height:1px;background:#d4d4d4"></div>
<div style="position:absolute;left:0px;top:282px;width:21px;height:1px;background:#c6c6c6"></div>
<div class="t cell c" style="left:22px;top:265px;width:63px;letter-spacing:0.179px">Joba</div>
<div class="t cell c" style="left:86px;top:265px;width:63px;letter-spacing:0.625px">Chamberlain</div>
<div class="t cell c" style="left:150px;top:265px;width:63px;letter-spacing:0.663px">sandra@test.com</div>
<div class="t cell c" style="left:342px;top:265px;width:63px;letter-spacing:0.560px">New York</div>
<div class="t cell c" style="left:406px;top:265px;width:63px;letter-spacing:-0.167px">NY</div>
<div class="t cell r" style="left:470px;top:265px;width:61px;letter-spacing:0.048px">10001</div>
<div class="t cell c" style="left:534px;top:265px;width:63px;letter-spacing:-0.029px">ONE</div>
<div class="t cell c" style="left:598px;top:265px;width:63px;letter-spacing:-0.438px">GARY</div>
<div class="t cell c" style="left:662px;top:265px;width:63px;letter-spacing:-0.595px">CARR</div>
<div class="t cell r" style="left:726px;top:265px;width:61px;letter-spacing:0.048px">40080</div>
<div class="t cell c" style="left:790px;top:265px;width:63px;letter-spacing:0.168px">11:15:00</div>
<div class="t cell c" style="left:854px;top:265px;width:63px;letter-spacing:0.168px">12:00:00</div>
<div class="t cell c" style="left:918px;top:265px;width:63px;letter-spacing:0.667px">Start&amp;Consult</div>
<div class="t cell" style="left:984px;top:265px;letter-spacing:0.662px">Aetna Two</div>
<div class="t" style="left:0;top:288px;width:18px;text-align:center;font-size:12px;color:#262626;-webkit-text-stroke:0.2px #262626">4</div>
<div style="position:absolute;left:22px;top:302px;width:1164px;height:1px;background:#d4d4d4"></div>
<div style="position:absolute;left:0px;top:302px;width:21px;height:1px;background:#c6c6c6"></div>
<div class="t cell c" style="left:22px;top:285px;width:63px;letter-spacing:0.715px">Don</div>
<div class="t cell c" style="left:86px;top:285px;width:63px;letter-spacing:0.976px">Mattingly</div>
<div class="t cell c" style="left:150px;top:285px;width:63px;letter-spacing:0.883px">patientde</div>
<div class="t cell c" style="left:342px;top:285px;width:63px;letter-spacing:0.560px">New York</div>
<div class="t cell c" style="left:406px;top:285px;width:63px;letter-spacing:-0.167px">NY</div>
<div class="t cell r" style="left:470px;top:285px;width:61px;letter-spacing:0.048px">10001</div>
<div class="t cell c" style="left:534px;top:285px;width:63px;letter-spacing:-0.029px">ONE</div>
<div class="t cell c" style="left:598px;top:285px;width:63px;letter-spacing:-0.438px">GARY</div>
<div class="t cell c" style="left:662px;top:285px;width:63px;letter-spacing:-0.595px">CARR</div>
<div class="t cell r" style="left:726px;top:285px;width:61px;letter-spacing:0.048px">40080</div>
<div class="t cell c" style="left:790px;top:285px;width:63px;letter-spacing:0.168px">13:00:00</div>
<div class="t cell c" style="left:854px;top:285px;width:63px;letter-spacing:0.168px">14:15:00</div>
<div class="t cell c" style="left:918px;top:285px;width:63px;letter-spacing:0.709px">Consult&amp;Follow</div>
<div class="t cell" style="left:984px;top:285px;letter-spacing:0.832px">Metlife One</div>
<div class="t" style="left:0;top:308px;width:18px;text-align:center;font-size:12px;color:#262626;-webkit-text-stroke:0.2px #262626">5</div>
<div style="position:absolute;left:22px;top:322px;width:1164px;height:1px;background:#d4d4d4"></div>
<div style="position:absolute;left:0px;top:322px;width:21px;height:1px;background:#c6c6c6"></div>
<div class="t cell c" style="left:22px;top:305px;width:63px;letter-spacing:-0.091px">Jessica</div>
<div class="t cell c" style="left:86px;top:305px;width:63px;letter-spacing:0.558px">Alba</div>
<div class="t cell c" style="left:150px;top:305px;width:63px;letter-spacing:0.883px">patientde</div>
<div class="t cell c" style="left:342px;top:305px;width:63px;letter-spacing:0.245px">Los Angeles</div>
<div class="t cell c" style="left:406px;top:305px;width:63px;letter-spacing:-0.325px">CA</div>
<div class="t cell r" style="left:470px;top:305px;width:61px;letter-spacing:0.048px">90185</div>
<div class="t cell c" style="left:534px;top:305px;width:63px;letter-spacing:-0.029px">ONE</div>
<div class="t cell c" style="left:598px;top:305px;width:63px;letter-spacing:-0.438px">GARY</div>
<div class="t cell c" style="left:662px;top:305px;width:63px;letter-spacing:-0.595px">CARR</div>
<div class="t cell r" style="left:726px;top:305px;width:61px;letter-spacing:0.048px">40081</div>
<div class="t cell c" style="left:790px;top:305px;width:63px;letter-spacing:0.168px">11:30:00</div>
<div class="t cell c" style="left:854px;top:305px;width:63px;letter-spacing:0.168px">12:15:00</div>
<div class="t cell c" style="left:918px;top:305px;width:63px;letter-spacing:0.568px">Consult&amp;Surgery</div>
<div class="t cell" style="left:984px;top:305px;letter-spacing:0.662px">Aetna Two</div>
<div class="t" style="left:0;top:328px;width:18px;text-align:center;font-size:12px;color:#262626;-webkit-text-stroke:0.2px #262626">6</div>
<div style="position:absolute;left:22px;top:342px;width:1164px;height:1px;background:#d4d4d4"></div>
<div style="position:absolute;left:0px;top:342px;width:21px;height:1px;background:#c6c6c6"></div>
<div class="t cell c" style="left:22px;top:325px;width:63px;letter-spacing:0.556px">Kristen</div>
<div class="t cell c" style="left:86px;top:325px;width:63px;letter-spacing:0.429px">Bell</div>
<div class="t cell c" style="left:150px;top:325px;width:63px;letter-spacing:0.883px">patientde</div>
<div class="t cell c" style="left:342px;top:325px;width:63px;letter-spacing:0.575px">Santa Monica</div>
<div class="t cell c" style="left:406px;top:325px;width:63px;letter-spacing:-0.325px">CA</div>
<div class="t cell r" style="left:470px;top:325px;width:61px;letter-spacing:0.048px">90410</div>
<div class="t cell c" style="left:534px;top:325px;width:63px;letter-spacing:-0.029px">ONE</div>
<div class="t cell c" style="left:598px;top:325px;width:63px;letter-spacing:-0.438px">GARY</div>
<div class="t cell c" style="left:662px;top:325px;width:63px;letter-spacing:-0.595px">CARR</div>
<div class="t cell r" style="left:726px;top:325px;width:61px;letter-spacing:0.048px">40081</div>
<div class="t cell c" style="left:790px;top:325px;width:63px;letter-spacing:0.168px">10:30:00</div>
<div class="t cell c" style="left:854px;top:325px;width:63px;letter-spacing:0.168px">11:15:00</div>
<div class="t cell c" style="left:918px;top:325px;width:63px;letter-spacing:0.709px">Consult&amp;Follow</div>
<div class="t cell" style="left:984px;top:325px;letter-spacing:0.612px">Delta Dental</div>
<div class="t" style="left:0;top:348px;width:18px;text-align:center;font-size:12px;color:#262626;-webkit-text-stroke:0.2px #262626">7</div>
<div style="position:absolute;left:22px;top:362px;width:1164px;height:1px;background:#d4d4d4"></div>
<div style="position:absolute;left:0px;top:362px;width:21px;height:1px;background:#c6c6c6"></div>
<div class="t cell c" style="left:22px;top:345px;width:63px;letter-spacing:0.332px">Jonah</div>
<div class="t cell c" style="left:86px;top:345px;width:63px;letter-spacing:0.590px">Hill</div>
<div class="t cell c" style="left:150px;top:345px;width:63px;letter-spacing:0.855px">support@</div>
<div class="t cell r" style="left:278px;top:345px;width:61px;letter-spacing:0.048px">858380</div>
<div class="t cell c" style="left:342px;top:345px;width:63px;letter-spacing:0.246px">San Diego</div>
<div class="t cell c" style="left:406px;top:345px;width:63px;letter-spacing:-0.325px">CA</div>
<div class="t cell r" style="left:470px;top:345px;width:61px;letter-spacing:0.048px">92199</div>
<div class="t cell c" style="left:534px;top:345px;width:63px;letter-spacing:-0.029px">ONE</div>
<div class="t cell c" style="left:598px;top:345px;width:63px;letter-spacing:-0.438px">GARY</div>
<div class="t cell c" style="left:662px;top:345px;width:63px;letter-spacing:-0.595px">CARR</div>
<div class="t cell r" style="left:726px;top:345px;width:61px;letter-spacing:0.048px">40081</div>
<div class="t cell c" style="left:790px;top:345px;width:63px;letter-spacing:0.168px">12:15:00</div>
<div class="t cell c" style="left:854px;top:345px;width:63px;letter-spacing:0.168px">13:15:00</div>
<div class="t cell c" style="left:918px;top:345px;width:63px;letter-spacing:0.532px">Consult</div>
<div class="t cell" style="left:984px;top:345px;letter-spacing:0.456px">Delta Dental Of NY</div>
<div class="t" style="left:0;top:368px;width:18px;text-align:center;font-size:12px;color:#262626;-webkit-text-stroke:0.2px #262626">8</div>
<div style="position:absolute;left:22px;top:382px;width:1164px;height:1px;background:#d4d4d4"></div>
<div style="position:absolute;left:0px;top:382px;width:21px;height:1px;background:#c6c6c6"></div>
<div class="t cell c" style="left:22px;top:365px;width:63px;letter-spacing:0.803px">Michael</div>
<div class="t cell c" style="left:86px;top:365px;width:63px;letter-spacing:0.148px">Jackson</div>
<div class="t cell c" style="left:342px;top:365px;width:63px;letter-spacing:0.246px">San Diego</div>
<div class="t cell c" style="left:406px;top:365px;width:63px;letter-spacing:-0.325px">CA</div>
<div class="t cell r" style="left:470px;top:365px;width:61px;letter-spacing:0.048px">1234</div>
<div class="t cell c" style="left:534px;top:365px;width:63px;letter-spacing:-0.029px">ONE</div>
<div class="t cell c" style="left:598px;top:365px;width:63px;letter-spacing:-0.438px">GARY</div>
<div class="t cell c" style="left:662px;top:365px;width:63px;letter-spacing:-0.595px">CARR</div>
<div class="t cell r" style="left:726px;top:365px;width:61px;letter-spacing:0.048px">40081</div>
<div class="t cell c" style="left:790px;top:365px;width:63px;letter-spacing:0.168px">13:15:00</div>
<div class="t cell c" style="left:854px;top:365px;width:63px;letter-spacing:0.168px">14:00:00</div>
<div class="t cell c" style="left:918px;top:365px;width:63px;letter-spacing:0.412px">Surgery</div>
<div class="t cell" style="left:984px;top:365px;letter-spacing:0.571px">Empire Blue Cross/Blue Shield</div>
<div class="t" style="left:0;top:388px;width:18px;text-align:center;font-size:12px;color:#262626;-webkit-text-stroke:0.2px #262626">9</div>
<div style="position:absolute;left:22px;top:402px;width:1164px;height:1px;background:#d4d4d4"></div>
<div style="position:absolute;left:0px;top:402px;width:21px;height:1px;background:#c6c6c6"></div>
<div class="t cell c" style="left:22px;top:385px;width:63px;letter-spacing:0.332px">Jonah</div>
<div class="t cell c" style="left:86px;top:385px;width:63px;letter-spacing:0.590px">Hill</div>
<div class="t cell c" style="left:150px;top:385px;width:63px;letter-spacing:0.855px">support@</div>
<div class="t cell r" style="left:278px;top:385px;width:61px;letter-spacing:0.048px">858380</div>
<div class="t cell c" style="left:342px;top:385px;width:63px;letter-spacing:0.246px">San Diego</div>
<div class="t cell c" style="left:406px;top:385px;width:63px;letter-spacing:-0.325px">CA</div>
<div class="t cell r" style="left:470px;top:385px;width:61px;letter-spacing:0.048px">92199</div>
<div class="t cell c" style="left:534px;top:385px;width:63px;letter-spacing:-0.029px">ONE</div>
<div class="t cell c" style="left:598px;top:385px;width:63px;letter-spacing:-0.438px">GARY</div>
<div class="t cell c" style="left:662px;top:385px;width:63px;letter-spacing:-0.595px">CARR</div>
<div class="t cell r" style="left:726px;top:385px;width:61px;letter-spacing:0.048px">40085</div>
<div class="t cell c" style="left:790px;top:385px;width:63px;letter-spacing:0.168px">12:15:00</div>
<div class="t cell c" style="left:854px;top:385px;width:63px;letter-spacing:0.168px">13:00:00</div>
<div class="t cell c" style="left:918px;top:385px;width:63px;letter-spacing:0.346px">Reschedu</div>
<div class="t cell" style="left:984px;top:385px;letter-spacing:0.456px">Delta Dental Of NY</div>
<div class="t" style="left:0;top:408px;width:18px;text-align:center;font-size:12px;color:#262626;-webkit-text-stroke:0.2px #262626">10</div>
<div style="position:absolute;left:22px;top:422px;width:1164px;height:1px;background:#d4d4d4"></div>
<div style="position:absolute;left:0px;top:422px;width:21px;height:1px;background:#c6c6c6"></div>
<div class="t cell c" style="left:22px;top:405px;width:63px;letter-spacing:0.332px">Jonah</div>
<div class="t cell c" style="left:86px;top:405px;width:63px;letter-spacing:0.590px">Hill</div>
<div class="t cell c" style="left:150px;top:405px;width:63px;letter-spacing:0.855px">support@</div>
<div class="t cell r" style="left:278px;top:405px;width:61px;letter-spacing:0.048px">858380</div>
<div class="t cell c" style="left:342px;top:405px;width:63px;letter-spacing:0.246px">San Diego</div>
<div class="t cell c" style="left:406px;top:405px;width:63px;letter-spacing:-0.325px">CA</div>
<div class="t cell r" style="left:470px;top:405px;width:61px;letter-spacing:0.048px">92199</div>
<div class="t cell c" style="left:534px;top:405px;width:63px;letter-spacing:-0.029px">ONE</div>
<div class="t cell c" style="left:598px;top:405px;width:63px;letter-spacing:-0.438px">GARY</div>
<div class="t cell c" style="left:662px;top:405px;width:63px;letter-spacing:-0.595px">CARR</div>
<div class="t cell r" style="left:726px;top:405px;width:61px;letter-spacing:0.048px">40086</div>
<div class="t cell c" style="left:790px;top:405px;width:63px;letter-spacing:0.168px">11:45:00</div>
<div class="t cell c" style="left:854px;top:405px;width:63px;letter-spacing:0.168px">12:45:00</div>
<div class="t cell c" style="left:918px;top:405px;width:63px;letter-spacing:0.605px">Start</div>
<div class="t cell" style="left:984px;top:405px;letter-spacing:0.456px">Delta Dental Of NY</div>
<div class="t" style="left:0;top:428px;width:18px;text-align:center;font-size:12px;color:#262626;-webkit-text-stroke:0.2px #262626">11</div>
<div style="position:absolute;left:22px;top:442px;width:1164px;height:1px;background:#d4d4d4"></div>
<div style="position:absolute;left:0px;top:442px;width:21px;height:1px;background:#c6c6c6"></div>
<div class="t cell c" style="left:22px;top:425px;width:63px;letter-spacing:0.332px">Jonah</div>
<div class="t cell c" style="left:86px;top:425px;width:63px;letter-spacing:0.590px">Hill</div>
<div class="t cell c" style="left:150px;top:425px;width:63px;letter-spacing:0.855px">support@</div>
<div class="t cell r" style="left:278px;top:425px;width:61px;letter-spacing:0.048px">858380</div>
<div class="t cell c" style="left:342px;top:425px;width:63px;letter-spacing:0.246px">San Diego</div>
<div class="t cell c" style="left:406px;top:425px;width:63px;letter-spacing:-0.325px">CA</div>
<div class="t cell r" style="left:470px;top:425px;width:61px;letter-spacing:0.048px">92199</div>
<div class="t cell c" style="left:534px;top:425px;width:63px;letter-spacing:-0.029px">ONE</div>
<div class="t cell c" style="left:598px;top:425px;width:63px;letter-spacing:-0.438px">GARY</div>
<div class="t cell c" style="left:662px;top:425px;width:63px;letter-spacing:-0.595px">CARR</div>
<div class="t cell r" style="left:726px;top:425px;width:61px;letter-spacing:0.048px">40087</div>
<div class="t cell c" style="left:790px;top:425px;width:63px;letter-spacing:0.168px">12:00:00</div>
<div class="t cell c" style="left:854px;top:425px;width:63px;letter-spacing:0.168px">12:45:00</div>
<div class="t cell c" style="left:918px;top:425px;width:63px;letter-spacing:0.346px">Reschedu</div>
<div class="t cell" style="left:984px;top:425px;letter-spacing:0.456px">Delta Dental Of NY</div>
<div class="t" style="left:0;top:448px;width:18px;text-align:center;font-size:12px;color:#262626;-webkit-text-stroke:0.2px #262626">12</div>
<div style="position:absolute;left:22px;top:462px;width:1164px;height:1px;background:#d4d4d4"></div>
<div style="position:absolute;left:0px;top:462px;width:21px;height:1px;background:#c6c6c6"></div>
<div class="t cell c" style="left:22px;top:445px;width:63px;letter-spacing:0.332px">Jonah</div>
<div class="t cell c" style="left:86px;top:445px;width:63px;letter-spacing:0.590px">Hill</div>
<div class="t cell c" style="left:150px;top:445px;width:63px;letter-spacing:0.855px">support@</div>
<div class="t cell r" style="left:278px;top:445px;width:61px;letter-spacing:0.048px">858380</div>
<div class="t cell c" style="left:342px;top:445px;width:63px;letter-spacing:0.246px">San Diego</div>
<div class="t cell c" style="left:406px;top:445px;width:63px;letter-spacing:-0.325px">CA</div>
<div class="t cell r" style="left:470px;top:445px;width:61px;letter-spacing:0.048px">92199</div>
<div class="t cell c" style="left:534px;top:445px;width:63px;letter-spacing:-0.029px">ONE</div>
<div class="t cell c" style="left:598px;top:445px;width:63px;letter-spacing:-0.438px">GARY</div>
<div class="t cell c" style="left:662px;top:445px;width:63px;letter-spacing:-0.595px">CARR</div>
<div class="t cell r" style="left:726px;top:445px;width:61px;letter-spacing:0.048px">40816</div>
<div class="t cell c" style="left:790px;top:445px;width:63px;letter-spacing:0.168px">14:15:00</div>
<div class="t cell c" style="left:854px;top:445px;width:63px;letter-spacing:0.168px">15:15:00</div>
<div class="t cell c" style="left:918px;top:445px;width:63px;letter-spacing:0.532px">Consult</div>
<div class="t cell" style="left:984px;top:445px;letter-spacing:0.456px">Delta Dental Of NY</div>
<div style="position:absolute;left:85px;top:223px;width:1px;height:233px;background:#d4d4d4"></div>
<div style="position:absolute;left:149px;top:223px;width:1px;height:233px;background:#d4d4d4"></div>
<div style="position:absolute;left:213px;top:223px;width:1px;height:233px;background:#d4d4d4"></div>
<div style="position:absolute;left:277px;top:223px;width:1px;height:233px;background:#d4d4d4"></div>
<div style="position:absolute;left:341px;top:223px;width:1px;height:233px;background:#d4d4d4"></div>
<div style="position:absolute;left:405px;top:223px;width:1px;height:233px;background:#d4d4d4"></div>
<div style="position:absolute;left:469px;top:223px;width:1px;height:233px;background:#d4d4d4"></div>
<div style="position:absolute;left:533px;top:223px;width:1px;height:233px;background:#d4d4d4"></div>
<div style="position:absolute;left:597px;top:223px;width:1px;height:233px;background:#d4d4d4"></div>
<div style="position:absolute;left:661px;top:223px;width:1px;height:233px;background:#d4d4d4"></div>
<div style="position:absolute;left:725px;top:223px;width:1px;height:233px;background:#d4d4d4"></div>
<div style="position:absolute;left:789px;top:223px;width:1px;height:233px;background:#d4d4d4"></div>
<div style="position:absolute;left:853px;top:223px;width:1px;height:233px;background:#d4d4d4"></div>
<div style="position:absolute;left:917px;top:223px;width:1px;height:233px;background:#d4d4d4"></div>
<div style="position:absolute;left:981px;top:223px;width:1px;height:233px;background:#d4d4d4"></div>
<div style="position:absolute;left:1109px;top:223px;width:1px;height:139px;background:#d4d4d4"></div>
<div style="position:absolute;left:1109px;top:382px;width:1px;height:74px;background:#d4d4d4"></div>
<div style="position:absolute;left:1173px;top:223px;width:1px;height:233px;background:#d4d4d4"></div>
<div style="position:absolute;left:20px;top:221px;width:67px;height:23px;border:2px solid #217346;box-sizing:border-box"></div>
<div style="position:absolute;left:82px;top:239px;width:7px;height:7px;background:#fff"></div>
<div style="position:absolute;left:83px;top:240px;width:5px;height:5px;background:#217346"></div>
<div style="position:absolute;left:0px;top:456px;width:1186px;height:1px;background:#a6a6a6"></div>
<div style="position:absolute;left:0px;top:457px;width:1186px;height:27px;background:#e6e6e6"></div>
<div style="position:absolute;left:0px;top:484px;width:1186px;height:1px;background:#c6c6c6"></div>
<div style="position:absolute;left:0px;top:485px;width:1186px;height:11px;background:#f3f3f3"></div>
<svg style="position:absolute;left:22px;top:466px;" width="6" height="8" viewBox="0 0 6 8"><path d="M5,0 V7 L0.5,3.5 Z" fill="#bdbdbd"/></svg>
<svg style="position:absolute;left:51px;top:466px;" width="6" height="8" viewBox="0 0 6 8"><path d="M0.5,0 V7 L5,3.5 Z" fill="#bdbdbd"/></svg>
<div style="position:absolute;left:96px;top:460px;width:1px;height:20px;background:#9a9a9a"></div>
<div class="t " style="left:110px;top:464px;font-size:12px;color:#444;letter-spacing:0.4px">Patients Seen</div>
<div style="position:absolute;left:203px;top:456px;width:163px;height:25px;background:#fff;border-left:1px solid #9e9e9e;border-right:1px solid #9e9e9e;box-sizing:border-box"></div>
<div style="position:absolute;left:203px;top:479px;width:164px;height:2px;background:#217346"></div>
<div class="t " style="left:215px;top:464px;font-size:12px;color:#217346;font-weight:bold;letter-spacing:0.5px">Patients Seen Detailed</div>
<svg style="position:absolute;left:398px;top:461px;" width="18" height="18" viewBox="0 0 18 18"><circle cx="9" cy="8.7" r="7.6" fill="none" stroke="#777" stroke-width="1.1"/><path d="M9,4.8 V12.6 M5.1,8.7 H12.9" stroke="#777" stroke-width="1.8"/></svg>
<svg style="position:absolute;left:909px;top:465px;" width="3" height="11" viewBox="0 0 3 11"><rect x="0.5" y="0.5" width="2" height="2" fill="#a6a6a6"/><rect x="0.5" y="4.5" width="2" height="2" fill="#a6a6a6"/><rect x="0.5" y="8.5" width="2" height="2" fill="#a6a6a6"/></svg>
<div style="position:absolute;left:927px;top:463px;width:259px;height:15px;background:#fff;border:1px solid #ababab;border-right:none;box-sizing:border-box"></div>
<div style="position:absolute;left:941px;top:463px;width:2px;height:15px;background:#ababab"></div>
<svg style="position:absolute;left:932px;top:467px;" width="5" height="8" viewBox="0 0 5 8"><path d="M4,0 V7 L0,3.5 Z" fill="#777"/></svg>
</body></html>
